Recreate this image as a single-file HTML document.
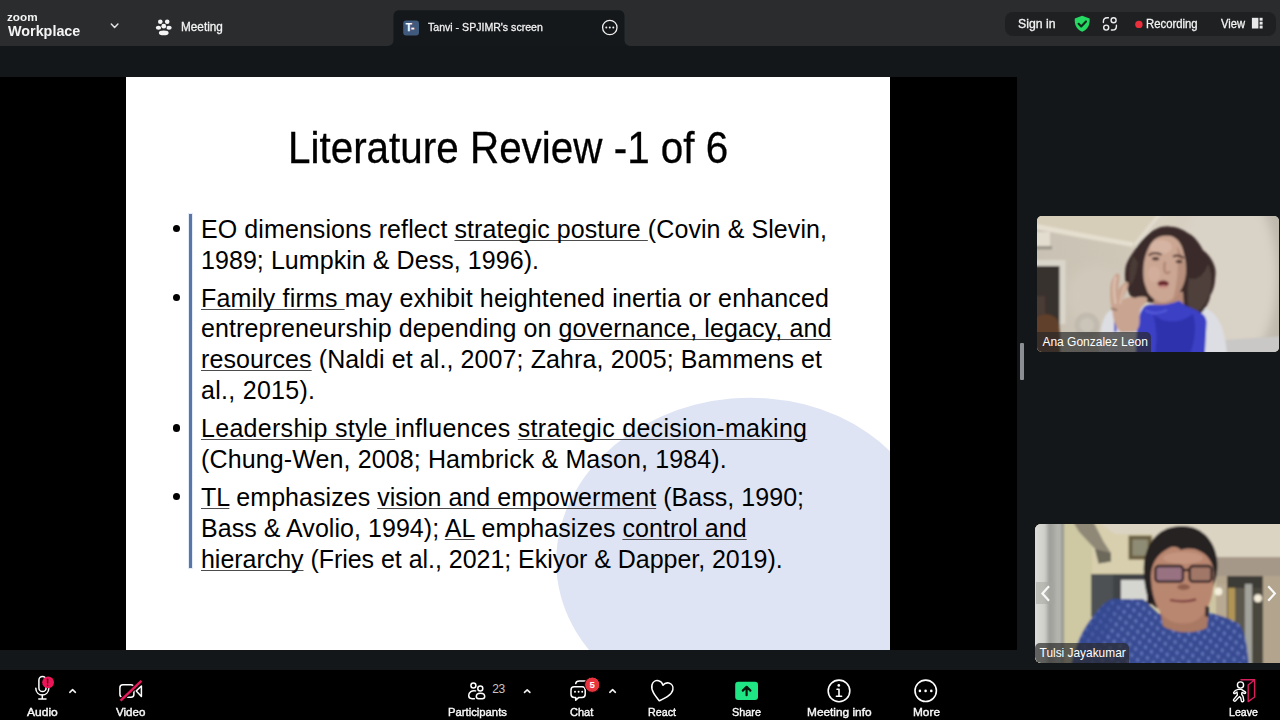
<!DOCTYPE html>
<html lang="en">
<head>
<meta charset="utf-8">
<title>Zoom Workplace</title>
<style>
*{box-sizing:border-box;margin:0;padding:0}
html,body{width:1280px;height:720px;overflow:hidden;background:#14171a;font-family:"Liberation Sans",sans-serif;color:#fff}
.abs{position:absolute}
#app{position:relative;width:1280px;height:720px;overflow:hidden;background:#14171a}
/* top bar */
#topbar{left:0;top:0;width:1280px;height:46px;background:#2a2c2e}
#tab{left:394px;top:10px;width:231px;height:36px;background:#17191b;border-radius:9px 9px 0 0}
#pill{left:1005.3px;top:12.2px;width:271px;height:24px;background:#1e2022;border-radius:8px}
.tx{position:absolute;z-index:3;white-space:nowrap;color:#f4f4f4;transform-origin:0 50%}
.tt{position:absolute;white-space:nowrap;font-size:12.5px;line-height:16px;color:#f2f2f2}
/* share area */
#stage{left:0;top:77px;width:1017px;height:573px;background:#000}
#slide{left:126px;top:77px;width:764px;height:573px;background:#fff;overflow:hidden;color:#000}
#blob{left:429.5px;top:320.6px;width:378.4px;height:317.2px;border-radius:50%;background:#dfe4f4;transform:rotate(-5deg)}
#vline{left:63.3px;top:136.8px;width:2.4px;height:354.6px;background:#5876a6;box-shadow:0 0 0 1px #e2ebf7}
.bl{position:absolute;width:7.3px;height:7.3px;border-radius:50%;background:#000}
.ln{position:absolute;white-space:nowrap;font-size:25px;line-height:30px;color:#000;left:201px;transform-origin:0 0}
.ln u{text-decoration:underline;text-decoration-thickness:1.1px;text-underline-offset:2.2px;text-decoration-color:#4c4c4c;text-decoration-skip-ink:none}
#title{position:absolute;white-space:nowrap;-webkit-text-stroke:.3px #000;font-size:43.5px;line-height:50px;color:#000;left:162.2px;top:46.2px;transform-origin:0 0;transform:scaleX(.929)}
/* tiles */
.tile{position:absolute;overflow:hidden;border-radius:5px}
.nm{position:absolute;left:0;bottom:0;height:20.2px;padding:0 3px 0 5.4px;font-size:12px;line-height:21.2px;color:#fff;background:rgba(40,40,40,.68);border-radius:0 5px 0 5px;white-space:nowrap}
/* toolbar */
#toolbar{left:0;top:670px;width:1280px;height:50px;background:#000}
.lb{position:absolute;top:705px;width:120px;margin-left:-60px;text-align:center;font-size:12px;line-height:14px;color:#fff;white-space:nowrap;-webkit-text-stroke:.25px #fff}
svg{position:absolute;overflow:visible}
</style>
</head>
<body>
<div id="app">
  <!-- TOPBAR -->
  <div id="topbar" class="abs"></div>
  <svg class="abs" width="1280" height="50" viewBox="0 0 1280 50" style="left:0;top:0"><path d="M387,46 C391,46 393.5,43.5 393.5,40 L393.5,16 C393.5,12.6 395.8,10.2 399.2,10.2 L618.8,10.2 C622.2,10.2 624.5,12.6 624.5,16 L624.5,40 C624.5,43.5 627,46 631,46 Z" fill="#15181b"/></svg>
  <div id="pill" class="abs"></div>
  <!-- TEXT LABELS -->
  <div class="tx" style="left:7.4px;top:10.4px;font-size:11.6px;line-height:14px;transform:scaleX(1.011);font-weight:bold">zoom</div>
  <div class="tx" style="left:7.9px;top:20.9px;font-size:15.5px;line-height:19px;transform:scaleX(0.926);font-weight:bold">Workplace</div>
  <div class="tx" style="left:180.9px;top:19.7px;font-size:12px;line-height:14px;transform:scaleX(0.981);-webkit-text-stroke:.3px #f2f2f2">Meeting</div>
  <div class="tx" style="left:427.9px;top:20.3px;font-size:11.6px;line-height:14px;transform:scaleX(0.912);-webkit-text-stroke:.3px #f2f2f2">Tanvi - SPJIMR's screen</div>
  <div class="tx" style="left:1018.1px;top:16.5px;font-size:12.2px;line-height:15px;transform:scaleX(1.006);-webkit-text-stroke:.3px #f2f2f2">Sign in</div>
  <div class="tx" style="left:1146.1px;top:16.5px;font-size:12.2px;line-height:15px;transform:scaleX(0.930);-webkit-text-stroke:.3px #f2f2f2">Recording</div>
  <div class="tx" style="left:1220.5px;top:16.5px;font-size:12.2px;line-height:15px;transform:scaleX(0.916);-webkit-text-stroke:.3px #f2f2f2">View</div>
  <div class="tx" style="left:27.0px;top:705.3px;font-size:11.4px;line-height:14px;transform:scaleX(1.055);-webkit-text-stroke:.4px #fff">Audio</div>
  <div class="tx" style="left:115.5px;top:705.3px;font-size:11.4px;line-height:14px;transform:scaleX(1.016);-webkit-text-stroke:.4px #fff">Video</div>
  <div class="tx" style="left:447.6px;top:705.3px;font-size:11.4px;line-height:14px;transform:scaleX(0.990);-webkit-text-stroke:.4px #fff">Participants</div>
  <div class="tx" style="left:569.5px;top:705.3px;font-size:11.4px;line-height:14px;transform:scaleX(0.968);-webkit-text-stroke:.4px #fff">Chat</div>
  <div class="tx" style="left:647.7px;top:705.3px;font-size:11.4px;line-height:14px;transform:scaleX(0.941);-webkit-text-stroke:.4px #fff">React</div>
  <div class="tx" style="left:732.1px;top:705.3px;font-size:11.4px;line-height:14px;transform:scaleX(0.954);-webkit-text-stroke:.4px #fff">Share</div>
  <div class="tx" style="left:807.2px;top:705.3px;font-size:11.4px;line-height:14px;transform:scaleX(1.041);-webkit-text-stroke:.4px #fff">Meeting info</div>
  <div class="tx" style="left:912.5px;top:705.3px;font-size:11.4px;line-height:14px;transform:scaleX(1.040);-webkit-text-stroke:.4px #fff">More</div>
  <div class="tx" style="left:1229.3px;top:705.3px;font-size:11.4px;line-height:14px;transform:scaleX(0.931);-webkit-text-stroke:.4px #fff">Leave</div>

  <!-- STAGE -->
  <div id="stage" class="abs"></div>
  <div id="slide" class="abs">
    <div id="blob" class="abs"></div>
    <div id="vline" class="abs"></div>
    <div class="bl" style="left:47.15px;top:147.65px"></div>
    <div class="bl" style="left:47.15px;top:216.55px"></div>
    <div class="bl" style="left:47.15px;top:347.45px"></div>
    <div class="bl" style="left:47.15px;top:415.85px"></div>
    <div id="title">Literature Review -1 of 6</div>
<div class="ln" style="left:75.0px;top:136.6px;letter-spacing:0.089px">EO dimensions reflect <u>strategic posture </u>(Covin &amp; Slevin,</div>
<div class="ln" style="left:75.0px;top:167.6px;letter-spacing:0.062px">1989; Lumpkin &amp; Dess, 1996).</div>
<div class="ln" style="left:75.0px;top:205.5px;letter-spacing:0.152px"><u>Family firms </u>may exhibit heightened inertia or enhanced</div>
<div class="ln" style="left:75.0px;top:236.1px;letter-spacing:0.102px">entrepreneurship depending on <u>governance, legacy, and</u></div>
<div class="ln" style="left:75.0px;top:267.3px;letter-spacing:0.102px"><u>resources</u> (Naldi et al., 2007; Zahra, 2005; Bammens et</div>
<div class="ln" style="left:75.0px;top:298.3px;letter-spacing:0.281px">al., 2015).</div>
<div class="ln" style="left:75.0px;top:336.4px;letter-spacing:0.296px"><u>Leadership style </u>influences <u>strategic decision-making</u></div>
<div class="ln" style="left:75.0px;top:366.8px;letter-spacing:0.124px">(Chung-Wen, 2008; Hambrick &amp; Mason, 1984).</div>
<div class="ln" style="left:75.0px;top:404.8px;letter-spacing:0.047px"><u>TL</u> emphasizes <u>vision and empowerment</u> (Bass, 1990;</div>
<div class="ln" style="left:75.0px;top:435.7px;letter-spacing:0.048px">Bass &amp; Avolio, 1994); <u>AL</u> emphasizes <u>control and</u></div>
<div class="ln" style="left:75.0px;top:466.6px;letter-spacing:-0.036px"><u>hierarchy</u> (Fries et al., 2021; Ekiyor &amp; Dapper, 2019).</div>
  </div>


  <!-- VIDEO TILES -->
  <div class="abs" style="left:1020px;top:343px;width:4px;height:37px;background:#8b8e92;border-radius:1px"></div>
  <div class="tile" style="left:1037px;top:216px;width:242px;height:136px;background:#cfc6b4">
    <svg width="242" height="136" viewBox="0 0 242 136" style="left:0;top:0">
      <defs>
        <filter id="b1" x="-20%" y="-20%" width="140%" height="140%"><feGaussianBlur stdDeviation="1.1"/></filter>
        <filter id="b2" x="-20%" y="-20%" width="140%" height="140%"><feGaussianBlur stdDeviation="2.2"/></filter>
        <filter id="b3" x="-30%" y="-30%" width="160%" height="160%"><feGaussianBlur stdDeviation="5"/></filter>
        <linearGradient id="w1" x1="0" x2="1" y1="0" y2="0"><stop offset="0" stop-color="#c9c2b4"/><stop offset=".36" stop-color="#cec7b8"/><stop offset=".5" stop-color="#d8d0c1"/><stop offset=".8" stop-color="#d3ccc0"/><stop offset="1" stop-color="#bdb7ac"/></linearGradient>
      </defs>
      <rect width="242" height="136" fill="url(#w1)"/>
      <g filter="url(#b3)">
        <ellipse cx="190" cy="60" rx="50" ry="90" fill="#d9d2c6"/>
        <ellipse cx="60" cy="80" rx="30" ry="30" fill="#d0c9bb"/>
      </g>
      <g filter="url(#b1)">
        <!-- ceiling -->
        <polygon points="-5,-5 123,-5 97,27 40,17 -5,8" fill="#d7ceb9"/>
        <polygon points="-5,7 40,16 97,26.5 96,31 40,21 -5,12.5" fill="#e5dfd0"/>
        <polygon points="123,-5 97,27 99,32 127,-5" fill="#e2dccf"/>
        <!-- AC -->
        <rect x="-2" y="16" width="15" height="15" fill="#e3ddd0"/>
        <rect x="-2" y="30" width="17" height="3.4" fill="#9c958a"/>
        <!-- door frame + door -->
        <rect x="-2" y="44" width="30.5" height="64" fill="#dad5ca"/>
        <rect x="-2" y="50" width="24.5" height="60" fill="#37312d"/>
        <rect x="-2" y="80" width="10" height="30" fill="#4a3a36"/>
        <!-- fan -->
        <circle cx="50" cy="109" r="12.5" fill="#c1baae"/>
        <circle cx="50" cy="109" r="7" fill="#cbc5b9"/>
        <!-- chair -->
        <path d="M-3,140 L-3,104 C2,97 14,96 20,103 C24,110 23,126 23,140 Z" fill="#60402c"/>
        <!-- sofa bottom right -->
        <polygon points="186,124 246,120 246,140 186,140" fill="#c9c8c6"/>
        <!-- shirt -->
        <path d="M62,140 C62,118 64,100 74,94 L92,90 L168,92 C182,98 188,112 190,140 Z" fill="#dddee3"/>
        <!-- hair -->
        <path d="M131.8,10.4 C124,10 118,13 112.9,17 C106,22 101,28 97.8,34 C92,42 88.6,48 88.3,54 C87.6,62 88.4,68 90.2,72 C92,78 94,82 98,84 L148,92 C149,98 151,102 156.4,102 C162,100 166,96 167.7,92.6 C171,88 172.6,84 173.4,79.3 C176.6,74 178,68 178.1,62.3 C179,57 178.6,53 177.1,49.1 C175,43 171,38 165.8,34 C162,26 157,20 150.7,17 C145,12.6 139,10.6 131.8,10.4 Z" fill="#3a2c2a"/>
        <path d="M152,62 C160,66 168,58 171,48 C176,58 176,72 170,84 C166,92 160,98 154,98 C150,90 150,76 152,62 Z" fill="#4f3f3b"/>
        <path d="M96,40 C92,50 91,60 93,70 C97,66 100,56 101,46 Z" fill="#4a3a36"/>
        <!-- neck -->
        <path d="M118,76 L146,76 L147,92 L116,92 Z" fill="#b48a77"/>
        <!-- face -->
        <path d="M129.9,19.8 C139,19.4 145,27 146.9,37.8 C148.6,44 149.2,50 148.8,56.7 C148.4,66 143,78 135.6,83.1 C131,86.6 126,87 122.3,86 C115,83 110.6,78 109.1,71.8 C107,67 106.2,62 106.3,56.7 C106,44 110,32 116,25 C120,21 125,19.8 129.9,19.8 Z" fill="#cba693"/>
        <path d="M140,30 C146,38 149,50 148.6,58 C148,68 143,78 136,83 C140,70 142,50 140,30 Z" fill="#b88f7b"/>
        <ellipse cx="124" cy="31" rx="11" ry="7" fill="#d6b4a3"/>
        <ellipse cx="117" cy="58" rx="6" ry="8" fill="#d2ad9b"/>
        <!-- brows / eyes -->
        <path d="M111.6,39.4 C115,36.6 120,36.4 124.6,38.6" stroke="#4a332e" stroke-width="1.9" fill="none"/>
        <path d="M136,40.6 C139.6,39 144,39.6 147,42.4" stroke="#4a332e" stroke-width="1.9" fill="none"/>
        <ellipse cx="118.6" cy="42.8" rx="3.6" ry="1.7" fill="#4c3631"/>
        <ellipse cx="142" cy="45.6" rx="3.4" ry="1.7" fill="#4c3631"/>
        <path d="M128,46 C127,50 126.6,53 128.4,56.4 C130,57.4 132,57 133,55.6" stroke="#a87c69" stroke-width="1.8" fill="none"/>
        <ellipse cx="126.2" cy="67.6" rx="5.6" ry="3.1" fill="#6a252d"/>
        <ellipse cx="126.2" cy="70.8" rx="5" ry="1.6" fill="#c98f84"/>
        <!-- scarf -->
        <path d="M107.2,90.7 C112,88 118,89 124.2,88.8 C130,89 136,87 141.2,85 C143.6,85 145.4,87 146.9,88.8 C153,92 160,94 165.8,98.2 C168,100 169.4,103 169.6,105.8 L167.7,140 L98.7,140 C99,128 99.6,116 100.6,105.8 C102,100 104,94 107.2,90.7 Z" fill="#3a3fc5"/>
        <path d="M116,98 C126,108 144,108 156,98 C160,110 158,126 152,140 L118,140 C120,126 120,110 116,98 Z" fill="#2e33ac"/>
        <path d="M108,94 C114,98 122,98 130,94" stroke="#5358d8" stroke-width="2.4" fill="none"/>
        <path d="M88,84 L97,82 L99,94 L90,95 Z" fill="#4046c8"/>
        <rect x="77" y="100" width="2.6" height="16" fill="#5a5fd0"/>
        <!-- hand -->
        <path d="M73.2,75.6 C72.6,68 75.6,60 79.8,57.6 C82.6,57.2 83,60 82.4,64 L81,74 C84,69 88,65.6 90.2,66.1 C92.6,67 91.6,71 89,76 L85.4,84 C90,81 95,80.2 97.8,82 C100,80.6 106,79.6 109.1,81.2 C111.6,83 110,86 106,89.6 C103,93 102,97 102.6,102 C103,108 102,113 98,116 L84,116.4 C79,112 76.4,105 75.6,97 C73.4,90 73,82 73.2,75.6 Z" fill="#c9a490"/>
        <path d="M78.6,60.6 C76.6,68 76.6,78 78.6,88" stroke="#dcc0b0" stroke-width="2.4" fill="none"/>
        <path d="M88,70 C86,76 84,82 83,88" stroke="#d8bba9" stroke-width="2" fill="none"/>
        <path d="M74,92.6 L80,94" stroke="#7a6256" stroke-width="1.4" fill="none"/>
      </g>
    </svg>
    <div class="nm">Ana Gonzalez Leon</div>
  </div>

  <div class="tile" style="left:1035px;top:524px;width:250px;height:139px;background:#cfc5a8;border-radius:6px">
    <svg width="245" height="139" viewBox="0 0 245 139" style="left:0;top:0">
      <defs>
        <pattern id="kp" width="10" height="11" patternUnits="userSpaceOnUse" patternTransform="rotate(-10)"><rect width="10" height="11" fill="#394b92"/><ellipse cx="2.5" cy="3" rx="1.3" ry="2.1" fill="#6b7fc4"/><ellipse cx="7.5" cy="8.5" rx="1.3" ry="2.1" fill="#6b7fc4"/></pattern>
        <linearGradient id="cur" x1="0" x2="1" y1="0" y2="0"><stop offset="0" stop-color="#e0e0dc"/><stop offset=".4" stop-color="#cfcfca"/><stop offset=".55" stop-color="#9c9d98"/><stop offset=".85" stop-color="#b9b9b3"/><stop offset="1" stop-color="#8f8f88"/></linearGradient>
      </defs>
      <rect width="245" height="139" fill="#cdc6a2"/>
      <g filter="url(#b1)">
        <!-- wall left cream -->
        <rect x="26" y="-3" width="34" height="145" fill="#cec8a3"/>
        <!-- back wall -->
        <rect x="57" y="-3" width="60" height="60" fill="#d8cfae"/>
        <!-- ceiling -->
        <polygon points="62,-3 250,-3 250,34 118,34 118,10 80,10" fill="#dcd4c3"/>
        <!-- curtain -->
        <rect x="-3" y="-3" width="32" height="145" fill="url(#cur)"/>
        <!-- beam -->
        <polygon points="37.6,-3 58,-3 68.5,17.4 76,29 76,37.6 63.7,39.6 60,25 44,7.7" fill="#8f8877"/>
        <polygon points="60,25 76,29 76,37.6 63.7,39.6" fill="#6c675a"/>
        <!-- frame -->
        <rect x="93.6" y="11.6" width="23" height="24" fill="#6a5e42"/>
        <rect x="97.4" y="15.4" width="15.4" height="16.4" fill="#8f8c74"/>
        <!-- cabinet -->
        <rect x="56" y="50" width="58" height="43" fill="#3f4345"/>
        <rect x="56" y="50" width="22" height="43" fill="#4d5153"/>
        <rect x="86" y="56" width="26" height="21" fill="#d6d6d1"/>
        <!-- right panels -->
        <rect x="181" y="33" width="70" height="20" fill="#a69888"/>
        <rect x="181" y="52" width="70" height="90" fill="#b3a48d"/>
        <rect x="192" y="52" width="36" height="90" fill="#3e3b35"/>
        <rect x="193" y="64" width="7" height="78" fill="#b09455"/>
        <rect x="200" y="64" width="10" height="78" fill="#5d584e"/>
        <rect x="210" y="60" width="7" height="82" fill="#a3a39c"/>
        <rect x="217" y="64" width="10" height="78" fill="#4a463e"/>
        <rect x="181" y="60" width="11" height="82" fill="#b8a992"/>
        <circle cx="183.4" cy="67.6" r="4" fill="#f6efdc"/>
        <circle cx="223" cy="74.3" r="4" fill="#f6efdc"/>
        <!-- body -->
        <path d="M36,142 C40,122 48,104 58,92.7 C64,84 70,78 77,75 L108,75 L123.5,90 L174,88.8 C188,92 198,96 204.6,100.4 C210,108 212,120 214,142 Z" fill="url(#kp)"/>
        <path d="M36,142 C40,122 48,104 58,92.7 C64,84 70,78 77,75 L92,75 C80,84 70,100 66,142 Z" fill="#34488f" opacity=".5"/>
        <!-- hair -->
        <path d="M146.7,2 C126,2 112,16 109,38.6 C108,52 110,66 114,78 L122,84 L176,66 C180,60 183,50 182.4,38.6 C181,18 168,2 146.7,2 Z" fill="#262122"/>
        <!-- neck -->
        <path d="M125,86 L174,86 L172,104 C160,110 140,110 128,102 Z" fill="#a97964"/>
        <!-- face -->
        <path d="M116,52 C116,40 122,30 134,24 C138,22 142,22 146,26 C156,22 170,26 176,38 C179,44 179,50 178.6,54 C179,70 174,86 164,95 C156,101 140,101 132,95 C122,88 116,70 116,52 Z" fill="#b98670"/>
        <ellipse cx="148" cy="34" rx="20" ry="6" fill="#c59580"/>
        <!-- glasses -->
        <rect x="120.4" y="42" width="27.6" height="15.6" rx="3.4" fill="#7d6390" fill-opacity=".55" stroke="#2a2024" stroke-width="2.3"/>
        <rect x="154.6" y="42" width="22" height="15.6" rx="3.4" fill="#86655f" fill-opacity=".45" stroke="#2a2024" stroke-width="2.3"/>
        <path d="M148,46 L154.6,46" stroke="#2a2024" stroke-width="2.4"/>
        <!-- nose / mouth -->
        <ellipse cx="148.6" cy="63" rx="6.4" ry="3" fill="#8f5e4e"/>
        <path d="M135,76 C143,77.6 154,77.6 161,75.4" stroke="#7a3c3e" stroke-width="2.2" fill="none"/>
        <!-- earrings -->
        <rect x="112.6" y="71" width="4.6" height="9" rx="2" fill="#221c20"/>
        <rect x="170" y="82" width="4" height="11" rx="2" fill="#3a3030"/>
      </g>
      <!-- arrows -->
      <rect x="1" y="58" width="18.3" height="22" fill="#a5a5a0" fill-opacity=".55"/>
      <path d="M14,62.2 L7.4,69.5 L14,76.8" stroke="#f8f8f8" stroke-width="2.2" fill="none"/>
      <path d="M233.2,62.2 L239.8,69.5 L233.2,76.8" stroke="#f8f8f8" stroke-width="2.2" fill="none"/>
    </svg>
    <div class="nm" style="font-size:11.9px;padding:0 3.6px 0 4.6px;height:19.8px;border-radius:5px 5px 0 6px">Tulsi Jayakumar</div>
  </div>

  <!-- TOOLBAR -->
  <div id="toolbar" class="abs"></div>

  <!-- ICONS (page coordinates) -->
  <svg id="ico" width="1280" height="720" viewBox="0 0 1280 720" style="left:0;top:0;pointer-events:none" fill="none" stroke-linecap="round" stroke-linejoin="round">
    <!-- top: chevron -->
    <path d="M111.3,24 L114.6,27.4 L117.9,24" stroke="#e4e4e4" stroke-width="1.5"/>
    <!-- top: meeting people -->
    <g fill="#f4f4f4" stroke="none">
      <circle cx="160.3" cy="21.8" r="2.3"/>
      <circle cx="167.2" cy="21.8" r="2.3"/>
      <ellipse cx="158.5" cy="27.7" rx="2.7" ry="2"/>
      <ellipse cx="169" cy="27.7" rx="2.7" ry="2"/>
      <circle cx="163.75" cy="26.2" r="3.0" fill="#2a2c2e"/>
      <circle cx="163.75" cy="26.2" r="2.4"/>
      <ellipse cx="163.75" cy="32.8" rx="5.4" ry="2.8" fill="#2a2c2e"/>
      <ellipse cx="163.75" cy="32.9" rx="4.9" ry="2.3"/>
    </g>
    <!-- tab avatar -->
    <rect x="403.2" y="20.4" width="15.8" height="15" rx="3" fill="#3f5a7c" stroke="none"/>
    <!-- tab ellipsis -->
    <circle cx="609.8" cy="27.5" r="7.2" stroke="#f0f0f0" stroke-width="1.3"/>
    <g fill="#f0f0f0" stroke="none"><circle cx="606.3" cy="27.5" r="1"/><circle cx="609.8" cy="27.5" r="1"/><circle cx="613.3" cy="27.5" r="1"/></g>
    <!-- shield -->
    <path d="M1082.2,15.8 L1089.6,18.4 C1090,24.6 1088.2,29 1082.2,31.8 C1076.2,29 1074.4,24.6 1074.8,18.4 Z" fill="#26d963" stroke="none"/>
    <path d="M1078.6,23.8 L1081.2,26.4 L1086,21.4" stroke="#0f2a1a" stroke-width="2.1"/>
    <!-- scan icon -->
    <g stroke="#ededed" stroke-width="1.4">
      <path d="M1103.4,22.6 L1103.4,21.6 C1103.4,19 1104.8,17.8 1107.2,17.8 L1108.4,17.8"/>
      <path d="M1116.4,25.2 L1116.4,26.2 C1116.4,28.8 1115,30 1112.6,30 L1111.4,30"/>
      <circle cx="1113.6" cy="20.2" r="2.5"/>
      <circle cx="1106.2" cy="27.6" r="2.5"/>
    </g>
    <!-- rec dot -->
    <circle cx="1138.9" cy="24.4" r="3.7" fill="#ea2f3c" stroke="none"/>
    <!-- view icon -->
    <g stroke="none" fill="#e9e9e9">
      <rect x="1251.9" y="17.8" width="6.5" height="10.7"/>
      <rect x="1259.6" y="17.8" width="3" height="2.9"/>
      <rect x="1259.6" y="21.7" width="3" height="2.9"/>
      <rect x="1259.6" y="25.6" width="3" height="2.9"/>
    </g>

    <!-- AUDIO mic -->
    <g stroke="#fff" stroke-width="1.5">
      <rect x="38.9" y="676.6" width="7.2" height="15" rx="3.6"/>
      <path d="M35.8,688.2 C36,697.2 48.6,697.2 48.8,688.2"/>
      <path d="M42.3,695 L42.3,698.8 M38.8,699 L46,699"/>
    </g>
    <circle cx="48.1" cy="682.3" r="5.9" fill="#ec1558" stroke="none"/>
    <path d="M47.6,679.2 L47.6,683" stroke="#5a0a20" stroke-width="1.5"/>
    <circle cx="47.6" cy="685.4" r=".8" fill="#5a0a20" stroke="none"/>
    <path d="M69.8,692.3 L72.6,689.7 L75.4,692.3" stroke="#f2f2f2" stroke-width="1.6"/>
    <!-- VIDEO -->
    <g stroke="#fff" stroke-width="1.5">
      <rect x="119.9" y="684.8" width="14" height="12.4" rx="3"/>
      <path d="M136.3,690.9 L141.4,686 L141.4,696.4 Z"/>
    </g>
    <path d="M121.6,699.6 L140.4,681.8" stroke="#000" stroke-width="4.6" stroke-linecap="butt"/><path d="M120.6,700.6 L141.4,680.8" stroke="#e8185a" stroke-width="2.4" stroke-linecap="butt"/>
    <!-- PARTICIPANTS -->
    <g stroke="#fff" stroke-width="1.5">
      <circle cx="473.4" cy="685.4" r="2.5"/>
      <path d="M475.6,690.9 C472,689.9 468.7,692.2 468.7,695.6 C468.7,697.9 470,698.7 472,698.7 L474.4,698.7"/>
      <circle cx="480.3" cy="688.6" r="2.5"/>
      <path d="M476.3,696.5 C476.3,694 478,693.3 480.5,693.3 C483,693.3 484.7,694 484.7,696.5 C484.7,698.1 483.7,698.7 482.3,698.7 L478.7,698.7 C477.3,698.7 476.3,698.1 476.3,696.5 Z"/>
    </g>
    <path d="M524.5,692.4 L527.2,689.8 L529.9,692.4" stroke="#f2f2f2" stroke-width="1.6"/>
    <!-- CHAT -->
    <g stroke="#fff" stroke-width="1.5">
      <path d="M575.7,683.6 C576,681.8 577.3,680.9 579.2,680.9 L586,680.9"/>
      <path d="M574.2,686.8 L582,686.8 C584,686.8 585.2,688 585.2,690 L585.2,694.2 C585.2,696.2 584,697.4 582,697.4 L578.8,697.4 L575.7,700.2 L575.7,697.4 L574.2,697.4 C572.2,697.4 571,696.2 571,694.2 L571,690 C571,688 572.2,686.8 574.2,686.8 Z"/>
    </g>
    <g fill="#fff" stroke="none"><circle cx="575" cy="691.8" r=".95"/><circle cx="578.6" cy="691.8" r=".95"/><circle cx="582.2" cy="691.8" r=".95"/></g>
    <circle cx="592.3" cy="684.7" r="7.7" fill="#e8343f" stroke="#000" stroke-width="1"/>
    <path d="M609.8,692.3 L612.6,689.6 L615.4,692.3" stroke="#f2f2f2" stroke-width="1.6"/>
    <!-- REACT heart -->
    <path transform="translate(661.5,691.3) rotate(13) scale(1.05)" d="M0,9.3 C-5,5.4 -10.2,1.4 -10.2,-3.8 C-10.2,-7.2 -7.7,-9.2 -5,-9.2 C-2.8,-9.2 -1,-8 0,-6 C1,-8 2.8,-9.2 5,-9.2 C7.7,-9.2 10.2,-7.2 10.2,-3.8 C10.2,1.4 5,5.4 0,9.3 Z" stroke="#fff" stroke-width="1.5"/>
    <!-- SHARE -->
    <rect x="735.2" y="681.8" width="22.8" height="18.2" rx="3" fill="#20e584" stroke="none"/>
    <path d="M746.6,695.2 L746.6,687 M742.8,690.6 L746.6,686.8 L750.4,690.6" stroke="#04140b" stroke-width="2.2"/>
    <!-- INFO -->
    <circle cx="839" cy="690.9" r="10.8" stroke="#fff" stroke-width="1.6"/>
    <circle cx="838.8" cy="685.4" r="1.35" fill="#fff" stroke="none"/>
    <path d="M837,689.2 L839,689.2 L839,696 M836.4,696.2 L841.6,696.2" stroke="#fff" stroke-width="1.6"/>
    <!-- MORE -->
    <circle cx="925.7" cy="690.8" r="10.7" stroke="#fff" stroke-width="1.6"/>
    <g fill="#fff" stroke="none"><circle cx="919.9" cy="690.9" r="1.3"/><circle cx="925.6" cy="690.9" r="1.3"/><circle cx="931.3" cy="690.9" r="1.3"/></g>
    <!-- LEAVE -->
    <g stroke="#d91e5c" stroke-width="1.4">
      <path d="M1241,679.8 L1254.6,679.8 L1254.6,697 L1248.2,701.6 L1248.2,685 L1254.4,680"/>
    </g>
    <g stroke="#fff" stroke-width="1.4">
      <circle cx="1240.5" cy="685" r="3.1"/>
      <path d="M1238,689.4 C1236,689.8 1234.4,691 1233.6,692.6 C1233.4,693.6 1234.6,694 1235.4,693.2 L1237,692 L1237.4,695 L1233.6,699.6 C1233,700.8 1234.6,701.8 1235.6,700.8 L1239.4,696.6 L1240.6,697.6 L1241.4,701 C1241.8,702.2 1243.8,702 1243.8,700.6 L1243,696.4 L1241.6,694.2 L1242,692.4 L1244.2,693.4 C1245.4,693.8 1246.2,692.6 1245.2,691.8 L1241.4,689.4 Z"/>
    </g>
  </svg>
  <div class="tt" style="left:405.7px;top:20.6px;font-size:10px;line-height:13px;font-weight:bold;letter-spacing:-.3px;-webkit-text-stroke:.25px #fff;color:#fff">T-</div>
  <div class="tt" style="left:589.6px;top:677.6px;font-size:9.6px;line-height:13px;font-weight:bold;width:5.4px;text-align:center;color:#fff">5</div>
  <div class="tt" style="left:492.3px;top:682.3px;font-size:12px;line-height:14px;color:#c6c6c6;letter-spacing:-.4px">23</div>
</div>
</body>
</html>
